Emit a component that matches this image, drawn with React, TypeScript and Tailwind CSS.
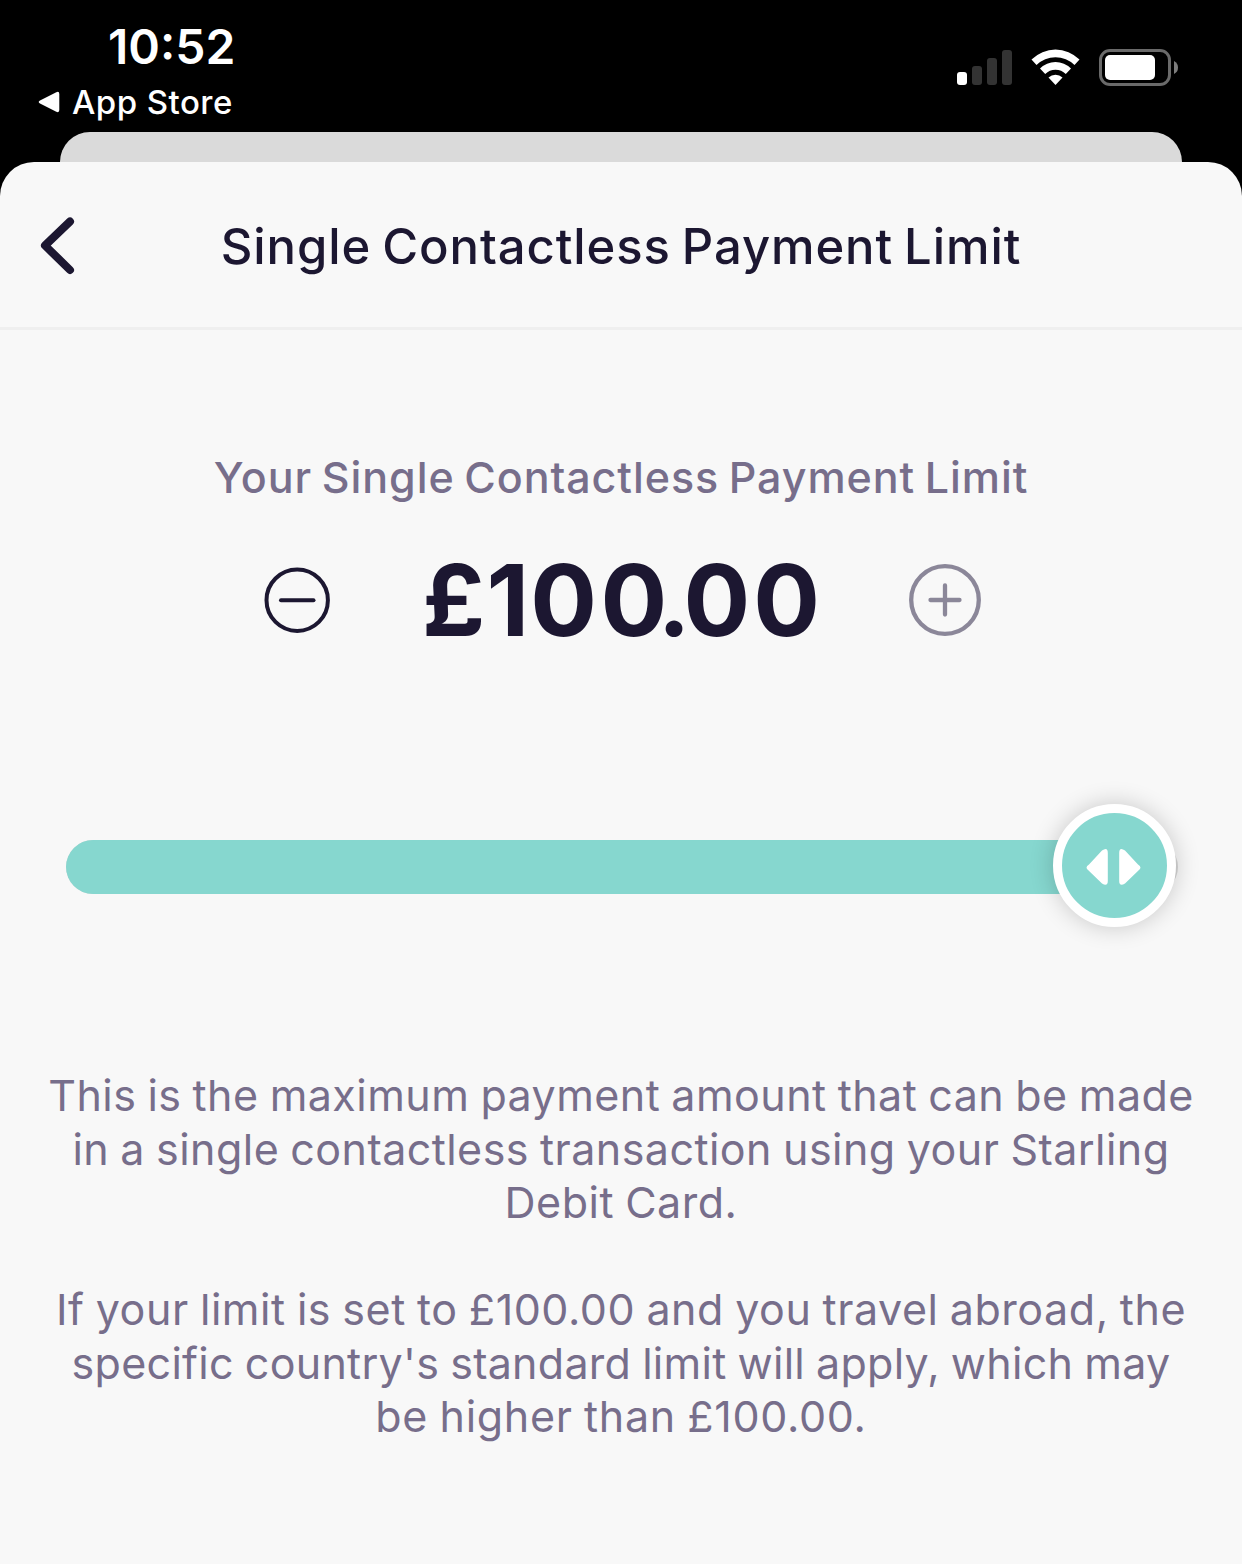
import React from "react";

function StatusBar() {
  return (
    <div className="flex h-[132px] justify-between bg-black text-white">
      <div className="flex flex-col pl-[38px] pt-[18px]">
        <div className="pl-[70px] text-[48px] font-semibold leading-[58px]">10:52</div>
        <div className="mt-[6px] flex items-center text-[33px] font-medium leading-[40px] tracking-[0.450px]">
          <svg width="22" height="22" viewBox="0 0 22 22" className="mr-[12px]">
            <path d="M2 9.6 18.3 1.2Q21.3 0 21.3 3v16q0 3-3 1.8L2 12.4q-2.600-1.400 0-2.800Z" fill="#fff" />
          </svg>
          App Store
        </div>
      </div>
      <svg width="224" height="44" viewBox="955 46 224 44" className="mr-[63px] mt-[46px]">
        <rect x="957" y="72" width="10" height="13" rx="3" fill="#fff" />
        <rect x="972" y="66" width="10" height="19" rx="3" fill="#333" />
        <rect x="987" y="58" width="10" height="27" rx="3" fill="#333" />
        <rect x="1002" y="50" width="10" height="35" rx="3" fill="#333" />
        <g fill="#fff">
          <path d="M1031.500 59.500A34 34 0 0 1 1079.500 59.500L1074.500 65A27 27 0 0 0 1036.500 65Z" />
          <path d="M1040 68.500A22 22 0 0 1 1071 68.500L1065.800 74A14.500 14.500 0 0 0 1045.200 74Z" />
          <path d="M1048.500 77.500A10.500 10.500 0 0 1 1062.500 77.500L1055.500 85Z" />
        </g>
        <rect x="1100.500" y="50.500" width="69" height="34" rx="9.500" fill="none" stroke="#6a6a6a" strokeWidth="3" />
        <rect x="1105" y="55" width="50" height="25" rx="5" fill="#fff" />
        <path d="M1174 61Q1178 63 1178 67.500T1174 74Z" fill="#7d7d7d" />
      </svg>
    </div>
  );
}

function Header() {
  return (
    <header className="flex h-[168px] items-center border-b-[3px] border-[#efefef] pl-[38px] pt-[3px] text-[#1c1731]">
      <svg width="40" height="60" viewBox="38 216 40 60">
        <path d="M70 221.500 45 245.500 70 270" fill="none" stroke="currentColor" strokeWidth="8" strokeLinecap="round" strokeLinejoin="round" />
      </svg>
      <h1 className="mt-[1px] w-[1086px] whitespace-nowrap text-center text-[49px] font-medium leading-[60px] tracking-[0.900px] [word-spacing:-2.900px]">Single Contactless Payment Limit</h1>
    </header>
  );
}

function AmountStepper() {
  return (
    <div className="mt-[35px] flex h-[120px] items-center pl-[261px] text-[#1c1731]">
      <button aria-label="Decrease limit">
        <svg width="72" height="72" viewBox="261 564 72 72">
          <circle cx="297.200" cy="600.200" r="30.700" fill="none" stroke="currentColor" strokeWidth="4" />
          <path d="M281 600.200h32.500" stroke="currentColor" strokeWidth="4" strokeLinecap="round" />
        </svg>
      </button>
      <div className="w-[576px] whitespace-nowrap text-center text-[99px] font-bold leading-[120px]">
        <span className="tracking-[1.250px]">£1</span><span className="tracking-[3.500px]">0</span><span className="tracking-[-7px]">0</span><span className="tracking-[-7px]">.</span><span className="tracking-[3px]">0</span>0
      </div>
      <button aria-label="Increase limit">
        <svg width="72" height="72" viewBox="909 564 72 72">
          <g fill="none" stroke="#8b8799" strokeWidth="4.300" strokeLinecap="round">
            <circle cx="945" cy="600" r="33.800" />
            <path d="M930.500 600h29M945 585.500v29" />
          </g>
        </svg>
      </button>
    </div>
  );
}

function Slider() {
  return (
    <div className="relative mx-[66px] mt-[144px] h-[123px]">
      <div className="absolute left-0 right-[-2px] top-[36px] h-[54px] rounded-full bg-[#d5d5d5]" />
      <div className="absolute left-0 right-[60px] top-[36px] h-[54px] rounded-l-full bg-[#86d7cf]" />
      <div className="absolute right-0 top-0 flex h-[123px] w-[123px] items-center justify-center rounded-full border-[9px] border-white bg-[#86d7cf] shadow-[0_0_24px_rgba(0,0,0,0.200)]">
        <svg width="56" height="38" viewBox="1086 848 56 38" className="mr-[1px] mt-[3px]">
          <path d="M1089 864.500 1102 850.500q5.800-4 5.800 2.500v28q0 6-5.800 2.500L1087.500 869.500q-2.500-2.500 1.500-5Z" fill="#fff" />
          <path d="M1138 864.500 1125 850.500q-5.800-4-5.800 2.500v28q0 6 5.800 2.500L1139.500 869.500q2.500-2.500-1.500-5Z" fill="#fff" />
        </svg>
      </div>
    </div>
  );
}

function Notes() {
  return (
    <div className="mt-[142px] whitespace-nowrap text-center text-[43px] leading-[53.500px] text-[#776e8b] [word-spacing:-1.400px]">
      <p>
        <span className="block tracking-[0.450px]">This is the maximum payment amount that can be made</span>
        <span className="block tracking-[0.450px]">in a single contactless transaction using your Starling</span>
        <span className="block tracking-[0.500px]">Debit Card.</span>
      </p>
      <p className="mt-[53.500px]">
        <span className="block tracking-[0.550px]">If your limit is set to £100.00 and you travel abroad, the</span>
        <span className="block tracking-[0.280px]">specific country's standard limit will apply, which may</span>
        <span className="block tracking-[0.700px]">be higher than £100.00.</span>
      </p>
    </div>
  );
}

export default function App() {
  return (
    <div className="h-[1564px] w-[1242px] overflow-hidden bg-black font-['Inter',sans-serif]">
      <StatusBar />
      <div className="mx-[60px] h-[30px] rounded-t-[30px] bg-[#dadada]" />
      <main className="h-[1402px] rounded-t-[34px] bg-[#f8f8f8]">
        <Header />
        <h2 className="mt-[119px] whitespace-nowrap text-center text-[43px] font-medium leading-[56px] tracking-[0.930px] text-[#776e8b] [word-spacing:-2.700px]">Your Single Contactless Payment Limit</h2>
        <AmountStepper />
        <Slider />
        <Notes />
      </main>
    </div>
  );
}
